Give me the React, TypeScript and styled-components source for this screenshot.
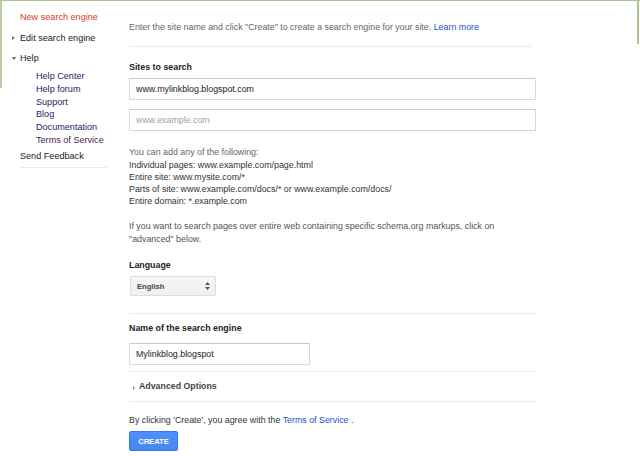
import React from 'react';
import styled, { createGlobalStyle } from "styled-components";

const GlobalStyle = createGlobalStyle`
  html, body {
    margin: 0;
    padding: 0;
    background: #fff;
  }
  body {
    font-family: "Liberation Sans", Arial, sans-serif;
    font-size: 9.1px;
    color: #222;
  }
`;

const FrameEdge = styled.div`
  position: absolute;
  top: 0;
  left: 0;
  width: 640px;
  height: 1px;
  background: #aac292;
  pointer-events: none;

  &::before {
    content: "";
    position: absolute;
    top: 0;
    left: 0;
    width: 2px;
    height: 88px;
    background: #b8cca4;
  }

  &::after {
    content: "";
    position: absolute;
    top: 0;
    right: 1px;
    width: 2px;
    height: 44px;
    background: #aac292;
  }
`;

const Page = styled.div`
  display: flex;
  align-items: flex-start;
  width: 640px;
`;

const Sidebar = styled.nav`
  width: 95px;
  padding: 11px 0 0 12px;
  flex-shrink: 0;
`;

const NavItem = styled.div<{ $active?: boolean }>`
  display: flex;
  align-items: center;
  height: 12px;
  line-height: 12px;
  margin-bottom: ${(p) => (p.$active ? 9 : 8)}px;
  color: ${(p) => (p.$active ? "#d63b30" : "#222")};
  white-space: nowrap;
`;

const ArrowSlot = styled.span`
  display: inline-flex;
  width: 8px;
  flex-shrink: 0;
  align-items: center;
`;

const ArrowRight = styled.span`
  width: 0;
  height: 0;
  border-left: 3px solid #777;
  border-top: 2.5px solid transparent;
  border-bottom: 2.5px solid transparent;
`;

const ArrowDown = styled.span`
  width: 0;
  height: 0;
  border-top: 3px solid #666;
  border-left: 2.5px solid transparent;
  border-right: 2.5px solid transparent;
`;

const SubList = styled.div`
  display: flex;
  flex-direction: column;
  padding-left: 24px;
  margin-top: -2px;
  margin-bottom: 3px;
`;

const SubLink = styled.a<{ $visited?: boolean }>`
  line-height: 12.8px;
  color: ${(p) => (p.$visited ? "#4b1e57" : "#1e2262")};
  text-decoration: none;
  white-space: nowrap;
`;

const SideRule = styled.div`
  height: 1px;
  background: #ebebeb;
  margin: -3px 0 0 8px;
`;

const Main = styled.main`
  width: 407px;
  margin-left: 22px;
  padding-top: 21px;
  font-size: 8.85px;
`;

const Intro = styled.p`
  margin: 0;
  line-height: 12px;
  color: #666;
`;

const Link = styled.a`
  color: #1155cc;
  text-decoration: none;
`;

const Rule = styled.hr<{ $width?: number; $top: number; $bottom: number }>`
  border: 0;
  height: 1px;
  background: #ebebeb;
  width: ${(p) => (p.$width ? `${p.$width}px` : "100%")};
  margin: ${(p) => p.$top}px 0 ${(p) => p.$bottom}px;
`;

const Label = styled.div<{ $gap: number }>`
  font-weight: bold;
  line-height: 12px;
  margin-bottom: ${(p) => p.$gap}px;
  color: #222;
`;

const TextInput = styled.input<{ $width?: number }>`
  box-sizing: border-box;
  display: block;
  width: ${(p) => (p.$width ? `${p.$width}px` : "100%")};
  height: 22px;
  padding: 0 6px;
  border: 1px solid #d9d9d9;
  border-top-color: #c8c8c8;
  border-radius: 1px;
  font-family: inherit;
  font-size: 8.85px;
  color: #222;
  background: #fff;
  outline: none;

  &::placeholder {
    color: #a0a0a0;
  }
`;

const InputStack = styled.div`
  display: flex;
  flex-direction: column;
  gap: 9px;
`;

const HelpBlock = styled.div`
  margin-top: 15px;
  line-height: 12px;
`;

const Muted = styled.div`
  color: #666;
  margin-bottom: 1px;
`;

const ExampleLine = styled.div`
  color: #333;
`;

const Note = styled.p`
  margin: 13px 0 0;
  line-height: 12.5px;
  color: #555;
  width: 400px;
`;

const Section = styled.div<{ $top: number }>`
  margin-top: ${(p) => p.$top}px;
`;

const SelectBox = styled.div`
  box-sizing: border-box;
  display: flex;
  align-items: center;
  justify-content: space-between;
  width: 86px;
  height: 20px;
  margin-left: 1px;
  padding: 0 5px 0 6px;
  border: 1px solid #dcdcdc;
  border-radius: 2px;
  background: linear-gradient(#f6f6f6, #f0f0f0);
  font-size: 7.6px;
  font-weight: bold;
  color: #444;
`;

const Toggle = styled.div`
  display: flex;
  align-items: center;
  gap: 4px;
  line-height: 12px;
  font-weight: bold;
  font-size: 8.8px;
  color: #444;
  padding-left: 4px;
`;

const SmallArrow = styled.span`
  width: 0;
  height: 0;
  margin-top: 4px;
  border-left: 2.5px solid #888;
  border-top: 2px solid transparent;
  border-bottom: 2px solid transparent;
`;

const Agree = styled.p`
  margin: 0 0 5px;
  line-height: 12px;
  color: #333;
`;

const CreateButton = styled.button`
  box-sizing: border-box;
  width: 49px;
  height: 20px;
  padding: 0;
  border: 1px solid #3079ed;
  border-radius: 2px;
  background: linear-gradient(#4d90fe, #4787ed);
  color: #fff;
  font-family: inherit;
  font-size: 7.6px;
  font-weight: bold;
  cursor: pointer;
`;

const SelectArrows = () => (
  <svg width="5" height="8" viewBox="0 0 5 8">
    <path d="M0 3 L2.5 0 L5 3 Z" fill="#555" />
    <path d="M0 5 L2.5 8 L5 5 Z" fill="#555" />
  </svg>
);

const App = () => {
  return (
    <>
      <GlobalStyle />
      <FrameEdge />
      <Page>
        <Sidebar>
          <NavItem $active>
            <ArrowSlot />
            New search engine
          </NavItem>
          <NavItem>
            <ArrowSlot><ArrowRight /></ArrowSlot>
            Edit search engine
          </NavItem>
          <NavItem>
            <ArrowSlot><ArrowDown /></ArrowSlot>
            Help
          </NavItem>
          <SubList>
            <SubLink>Help Center</SubLink>
            <SubLink>Help forum</SubLink>
            <SubLink>Support</SubLink>
            <SubLink>Blog</SubLink>
            <SubLink>Documentation</SubLink>
            <SubLink $visited>Terms of Service</SubLink>
          </SubList>
          <NavItem>
            <ArrowSlot />
            Send Feedback
          </NavItem>
          <SideRule />
        </Sidebar>

        <Main>
          <Intro>
            Enter the site name and click "Create" to create a search engine for your site.{" "}
            <Link>Learn more</Link>
          </Intro>
          <Rule $width={402} $top={13} $bottom={14} />

          <Label $gap={5}>Sites to search</Label>
          <InputStack>
            <TextInput defaultValue="www.mylinkblog.blogspot.com" />
            <TextInput placeholder="www.example.com" />
          </InputStack>

          <HelpBlock>
            <Muted>You can add any of the following:</Muted>
            <ExampleLine>Individual pages: www.example.com/page.html</ExampleLine>
            <ExampleLine>Entire site: www.mysite.com/*</ExampleLine>
            <ExampleLine>Parts of site: www.example.com/docs/* or www.example.com/docs/</ExampleLine>
            <ExampleLine>Entire domain: *.example.com</ExampleLine>
          </HelpBlock>
          <Note>
            If you want to search pages over entire web containing specific schema.org markups, click on
            "advanced" below.
          </Note>

          <Section $top={14}>
            <Label $gap={5}>Language</Label>
            <SelectBox>
              English
              <SelectArrows />
            </SelectBox>
          </Section>
          <Rule $top={17} $bottom={8} />

          <Label $gap={9}>Name of the search engine</Label>
          <TextInput $width={181} defaultValue="Mylinkblog.blogspot" />
          <Rule $top={6} $bottom={8} />

          <Toggle>
            <SmallArrow />
            Advanced Options
          </Toggle>
          <Rule $top={9} $bottom={12} />

          <Agree>
            By clicking 'Create', you agree with the <Link>Terms of Service</Link> .
          </Agree>
          <CreateButton>CREATE</CreateButton>
        </Main>
      </Page>
    </>
  );
};

export default App;
